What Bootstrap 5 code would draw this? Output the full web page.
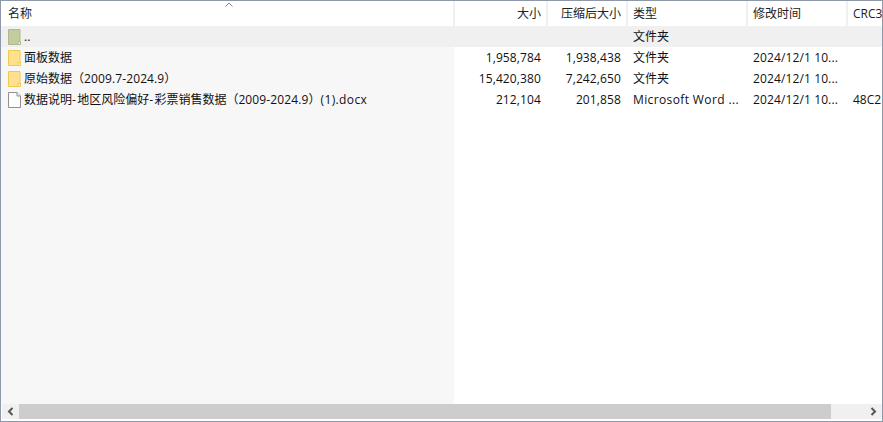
<!DOCTYPE html>
<html lang="zh-CN"><head><meta charset="utf-8"><title>文件列表</title>
<link href="https://cdn.jsdelivr.net/npm/bootstrap@5.3.0/dist/css/bootstrap.min.css" rel="stylesheet">
<style>
html,body{height:422px;overflow:hidden;margin:0;background:#fff}
body{font-family:"Open Sans","Noto Sans CJK SC",sans-serif;font-size:12px;color:#111;line-height:21px}
.win{height:422px;border:1px solid #8e98a8;background:#fff}
.hdr{height:25px;background:#fff;color:#222}
.hdr .cell{height:25px;line-height:26px;border-right:2px solid #f0f0f0;white-space:nowrap}
.hdr .cell.last{border-right:0}
.c1{width:454px;flex:none;padding-left:7px}
.c2{width:93px;flex:none;text-align:right;padding-right:5px}
.c3{width:80px;flex:none;text-align:right;padding-right:5px}
.c4{width:120px;flex:none;padding-left:5px}
.c5{width:100px;flex:none;padding-left:5px}
.c6{flex:1 1 0;padding-left:5px;overflow:hidden;white-space:nowrap}
.rows{background:linear-gradient(to right,#f7f7f7 453px,#fff 453px)}
.rw{height:21px;white-space:nowrap}
.rw.up{background:#f0f0f0}
.rw .c1{padding-left:7px}
.rw .c2,.rw .c3{padding-right:7px}
.ltn{letter-spacing:.12px}
.ltw{letter-spacing:.38px}
.hyp{letter-spacing:1.3px}
.ic{width:13px;height:16px;flex:none;margin-right:3px;display:block}
.caret{position:absolute;left:224px;top:1px;width:8px;height:5px}
.hscroll{height:15px;background:#f0f0f0;margin:0 0 2px 1px}
.arr{width:17px;flex:none}
.track{flex:1 1 0}
.thumb{width:812px;height:15px;background:#cdcdcd}
</style></head><body>
<div class="win d-flex flex-column position-relative">
  <div class="hdr d-flex">
    <div class="cell c1">名称</div><div class="cell c2">大小</div><div class="cell c3">压缩后大小</div><div class="cell c4">类型</div><div class="cell c5">修改时间</div><div class="cell c6 last">CRC32</div>
  </div>
  <svg class="caret" viewBox="0 0 8 5"><path d="M.5 4.5 4 1l3.5 3.5" fill="none" stroke="#8a8a8a"/></svg>
  <div class="rows flex-grow-1">
    <div class="rw up d-flex">
      <div class="c1 d-flex align-items-center"><svg class="ic" viewBox="0 0 13 16"><path d="M.5.5h11.500v15H.5z" fill="#c3cc9d" stroke="#adb98a"/><path d="M10 15.500v-3h2.500v3z" fill="#e8ecd8" stroke="#adb98a"/></svg>..</div>
      <div class="c2"></div><div class="c3"></div><div class="c4">文件夹</div><div class="c5"></div><div class="c6"></div>
    </div>
    <div class="rw d-flex">
      <div class="c1 d-flex align-items-center"><svg class="ic" viewBox="0 0 13 16"><path d="M.5.5h11.500v15H.5z" fill="#ffe08f" stroke="#f2c94f"/><path d="M10 15.500v-3h2.500v3z" fill="#fff3c8" stroke="#f2c94f"/></svg>面板数据</div>
      <div class="c2 ltn">1,958,784</div><div class="c3 ltn">1,938,438</div><div class="c4">文件夹</div><div class="c5 ltn">2024/12/1 10...</div><div class="c6"></div>
    </div>
    <div class="rw d-flex">
      <div class="c1 d-flex align-items-center"><svg class="ic" viewBox="0 0 13 16"><path d="M.5.5h11.500v15H.5z" fill="#ffe08f" stroke="#f2c94f"/><path d="M10 15.500v-3h2.500v3z" fill="#fff3c8" stroke="#f2c94f"/></svg><span>原始数据（<span class="ltn">2009.7-2024.9</span>）</span></div>
      <div class="c2 ltn">15,420,380</div><div class="c3 ltn">7,242,650</div><div class="c4">文件夹</div><div class="c5 ltn">2024/12/1 10...</div><div class="c6"></div>
    </div>
    <div class="rw d-flex">
      <div class="c1 d-flex align-items-center"><svg class="ic" viewBox="0 0 13 16"><path d="M.5.5h8.500l3.500 3.500v11.500H.5z" fill="#fdfdfd" stroke="#8f8f8f"/><path d="M9 .5V4h3.500" fill="#eee" stroke="#8f8f8f"/></svg><span>数据说明<span class="hyp">-</span>地区风险偏好<span class="hyp">-</span>彩票销售数据（<span class="ltn">2009-2024.9</span>）<span class="ltw">(1).docx</span></span></div>
      <div class="c2 ltn">212,104</div><div class="c3 ltn">201,858</div><div class="c4 ltw">Microsoft Word ...</div><div class="c5 ltn">2024/12/1 10...</div><div class="c6">48C2</div>
    </div>
  </div>
  <div class="hscroll d-flex">
    <div class="arr d-flex align-items-center justify-content-center"><svg width="7" height="9" viewBox="0 0 7 9"><path d="M5.500 1 2 4.500 5.500 8" fill="none" stroke="#555" stroke-width="2"/></svg></div>
    <div class="track"><div class="thumb"></div></div>
    <div class="arr d-flex align-items-center justify-content-center"><svg width="7" height="9" viewBox="0 0 7 9"><path d="M1.500 1 5 4.500 1.500 8" fill="none" stroke="#555" stroke-width="2"/></svg></div>
  </div>
</div>
</body></html>
